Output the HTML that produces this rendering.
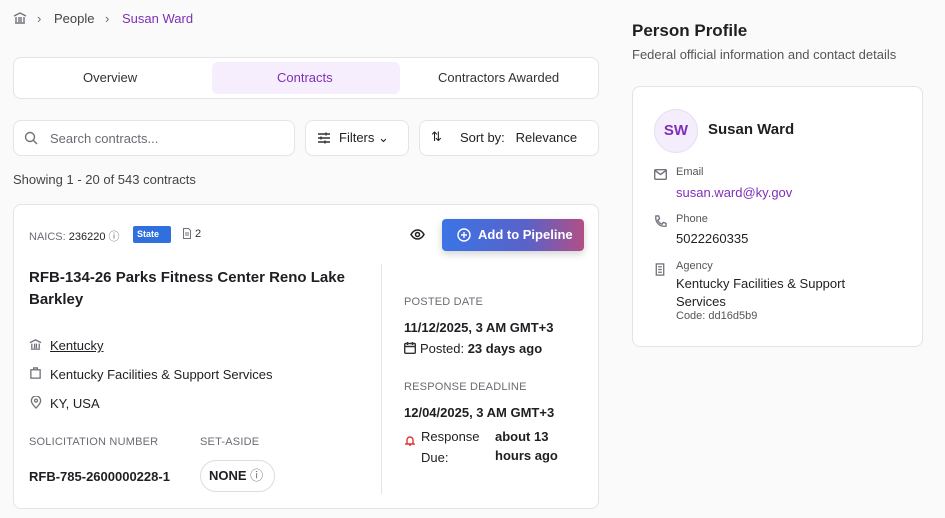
<!DOCTYPE html>
<html><head><meta charset="utf-8"><style>
*{box-sizing:border-box;margin:0;padding:0}
body{width:945px;height:518px;background:#fafafa;font-family:"Liberation Sans",sans-serif;color:#1f1f23;position:relative;overflow:hidden;font-size:13px}
.a{position:absolute;white-space:nowrap}
.box{position:absolute;background:#fff;border:1px solid #e4e4e7;border-radius:8px}
.g{color:#6b6b73}
.lbl{font-size:11px;color:#6b6b73;letter-spacing:.2px}
.b{font-weight:bold}
svg{position:absolute;fill:none;stroke:#71717a;stroke-width:1.4}
</style></head><body>
<svg style="left:13px;top:11px" width="14" height="14" viewBox="0 0 14 14"><path d="M1 5L7 2l6 3M2 12h10M3 6v5M6 6v5M8 6v5M11 6v5"/></svg>
<div class="a g" style="left:37px;top:11px">›</div>
<div class="a" style="left:54px;top:11px;color:#444">People</div>
<div class="a g" style="left:105px;top:11px">›</div>
<div class="a" style="left:122px;top:11px;color:#7e2fb8">Susan Ward</div>
<div class="box" style="left:13px;top:57px;width:586px;height:42px"></div>
<div class="a" style="left:212px;top:62px;width:188px;height:32px;background:#f6eefc;border-radius:6px"></div>
<div class="a" style="left:83px;top:70px;color:#333">Overview</div>
<div class="a" style="left:277px;top:70px;color:#7e2fb8">Contracts</div>
<div class="a" style="left:438px;top:70px;color:#333">Contractors Awarded</div>
<div class="box" style="left:13px;top:120px;width:282px;height:36px"></div>
<svg style="left:24px;top:131px" width="14" height="14" viewBox="0 0 14 14"><circle cx="6" cy="6" r="4.5"/><path d="M9.5 9.5L13 13"/></svg>
<div class="a g" style="left:50px;top:131px">Search contracts...</div>
<div class="box" style="left:305px;top:120px;width:104px;height:36px"></div>
<svg style="left:317px;top:131px;stroke:#333" width="14" height="14" viewBox="0 0 14 14"><path d="M1 3h12M1 7h12M1 11h12M9 1.5v3M4 5.5v3M8 9.5v3"/></svg>
<div class="a" style="left:339px;top:130px">Filters ⌄</div>
<div class="box" style="left:419px;top:120px;width:180px;height:36px"></div>
<div class="a" style="left:431px;top:129px">⇅</div>
<div class="a" style="left:460px;top:130px">Sort by:&nbsp;&nbsp; Relevance</div>
<div class="a" style="left:13px;top:172px;color:#444">Showing 1 - 20 of 543 contracts</div>
<div class="box" style="left:13px;top:204px;width:586px;height:305px"></div>
<div class="a" style="left:29px;top:228px;font-size:11px"><span class="g">NAICS:</span> 236220 <span class="g">ⓘ</span></div>
<div class="a" style="left:133px;top:226px;width:38px;height:17px;background:#2f6fde;color:#fff;font-size:9px;font-weight:bold;padding:3px 4px;border-radius:2px">State</div>
<svg style="left:183px;top:228px;stroke-width:1" width="8" height="11" viewBox="0 0 8 11"><path d="M.5.5h5l2 2v8h-7zM2 5h4M2 7h4"/></svg>
<div class="a" style="left:195px;top:228px;font-size:11px;color:#333">2</div>
<svg style="left:410px;top:229px;stroke:#222;stroke-width:1.5" width="15" height="11" viewBox="0 0 15 11"><path d="M1 5.5C3 2 5 1 7.5 1S12 2 14 5.5C12 9 10 10 7.5 10S3 9 1 5.5z"/><circle cx="7.5" cy="5.5" r="2"/></svg>
<div class="a" style="left:442px;top:219px;width:142px;height:32px;border-radius:4px;background:linear-gradient(90deg,#3b74e6,#5a62c8 60%,#b14f85);box-shadow:0 3px 8px rgba(0,0,0,.18)"></div>
<svg style="left:457px;top:228px;stroke:#fff" width="14" height="14" viewBox="0 0 14 14"><circle cx="7" cy="7" r="6"/><path d="M7 4v6M4 7h6"/></svg>
<div class="a b" style="left:478px;top:227px;color:#fff">Add to Pipeline</div>
<div class="a b" style="left:29px;top:267px;font-size:15px;line-height:22px;white-space:normal;width:340px">RFB-134-26 Parks Fitness Center Reno Lake Barkley</div>
<div class="a" style="left:381px;top:264px;width:1px;height:230px;background:#e4e4e7"></div>
<svg style="left:29px;top:338px" width="13" height="13" viewBox="0 0 14 14"><path d="M1 5L7 2l6 3M2 12h10M3 6v5M6 6v5M8 6v5M11 6v5"/></svg>
<div class="a" style="left:50px;top:338px;text-decoration:underline">Kentucky</div>
<svg style="left:29px;top:367px" width="13" height="13" viewBox="0 0 14 14"><rect x="2" y="3" width="10" height="9"/><path d="M5 3V1h4v2"/></svg>
<div class="a" style="left:50px;top:367px">Kentucky Facilities &amp; Support Services</div>
<svg style="left:30px;top:396px" width="12" height="13" viewBox="0 0 12 14"><path d="M6 13S1 8 1 5a5 5 0 0110 0c0 3-5 8-5 8z"/><circle cx="6" cy="5" r="1.6"/></svg>
<div class="a" style="left:50px;top:396px">KY, USA</div>
<div class="a lbl" style="left:29px;top:436px">SOLICITATION NUMBER</div>
<div class="a lbl" style="left:200px;top:436px">SET-ASIDE</div>
<div class="a b" style="left:29px;top:469px">RFB-785-2600000228-1</div>
<div class="a b" style="left:200px;top:460px;width:75px;height:32px;border:1px solid #ddd;border-radius:16px;padding:0 0 0 8px;line-height:30px">NONE <span class="g" style="font-weight:normal">ⓘ</span></div>
<div class="a lbl" style="left:404px;top:296px">POSTED DATE</div>
<div class="a b" style="left:404px;top:320px">11/12/2025, 3 AM GMT+3</div>
<svg style="left:404px;top:342px;stroke:#333" width="12" height="12" viewBox="0 0 12 12"><rect x=".7" y="1.5" width="10.6" height="9.8" rx="1"/><path d="M.7 4.5h10.6M3.5 0v3M8.5 0v3"/></svg>
<div class="a" style="left:420px;top:341px">Posted: <b>23 days ago</b></div>
<div class="a lbl" style="left:404px;top:381px">RESPONSE DEADLINE</div>
<div class="a b" style="left:404px;top:405px">12/04/2025, 3 AM GMT+3</div>
<svg style="left:405px;top:435px;stroke:#d33" width="10" height="11" viewBox="0 0 10 11"><path d="M2 8V5a3 3 0 016 0v3l1 1H1zM4 10h2"/></svg>
<div class="a" style="left:421px;top:426px;line-height:21px">Response<br>Due:</div>
<div class="a b" style="left:495px;top:427px;line-height:19px">about 13<br>hours ago</div>
<div class="a b" style="left:632px;top:21px;font-size:17px">Person Profile</div>
<div class="a g" style="left:632px;top:47px;color:#555">Federal official information and contact details</div>
<div class="box" style="left:632px;top:86px;width:291px;height:261px"></div>
<div class="a b" style="left:654px;top:109px;width:44px;height:44px;border-radius:50%;background:#f4edfb;border:1px solid #e8dcf3;color:#7e2fb8;font-size:15px;text-align:center;line-height:42px">SW</div>
<div class="a b" style="left:708px;top:121px;font-size:15px">Susan Ward</div>
<svg style="left:654px;top:169px" width="13" height="11" viewBox="0 0 13 11"><rect x=".7" y=".7" width="11.6" height="9.6" rx="1"/><path d="M1 1.5l5.5 4 5.5-4"/></svg>
<div class="a" style="left:676px;top:166px;font-size:11px;color:#555">Email</div>
<div class="a" style="left:676px;top:185px;color:#7e2fb8">susan.ward@ky.gov</div>
<svg style="left:654px;top:215px" width="13" height="13" viewBox="0 0 14 14"><path d="M2 1l3 0 1 3-2 1.5a8 8 0 004.5 4.5L10 8l3 1v3c-7 1-12-4-11-11z"/></svg>
<div class="a" style="left:676px;top:213px;font-size:11px;color:#555">Phone</div>
<div class="a" style="left:676px;top:231px">5022260335</div>
<svg style="left:654px;top:263px" width="12" height="13" viewBox="0 0 12 14"><rect x="2" y="1" width="8" height="12"/><path d="M4 4h4M4 7h4M4 10h4"/></svg>
<div class="a" style="left:676px;top:260px;font-size:11px;color:#555">Agency</div>
<div class="a" style="left:676px;top:275px;line-height:18px">Kentucky Facilities &amp; Support<br>Services</div>
<div class="a" style="left:676px;top:310px;font-size:11px;color:#555">Code: dd16d5b9</div>
</body></html>
